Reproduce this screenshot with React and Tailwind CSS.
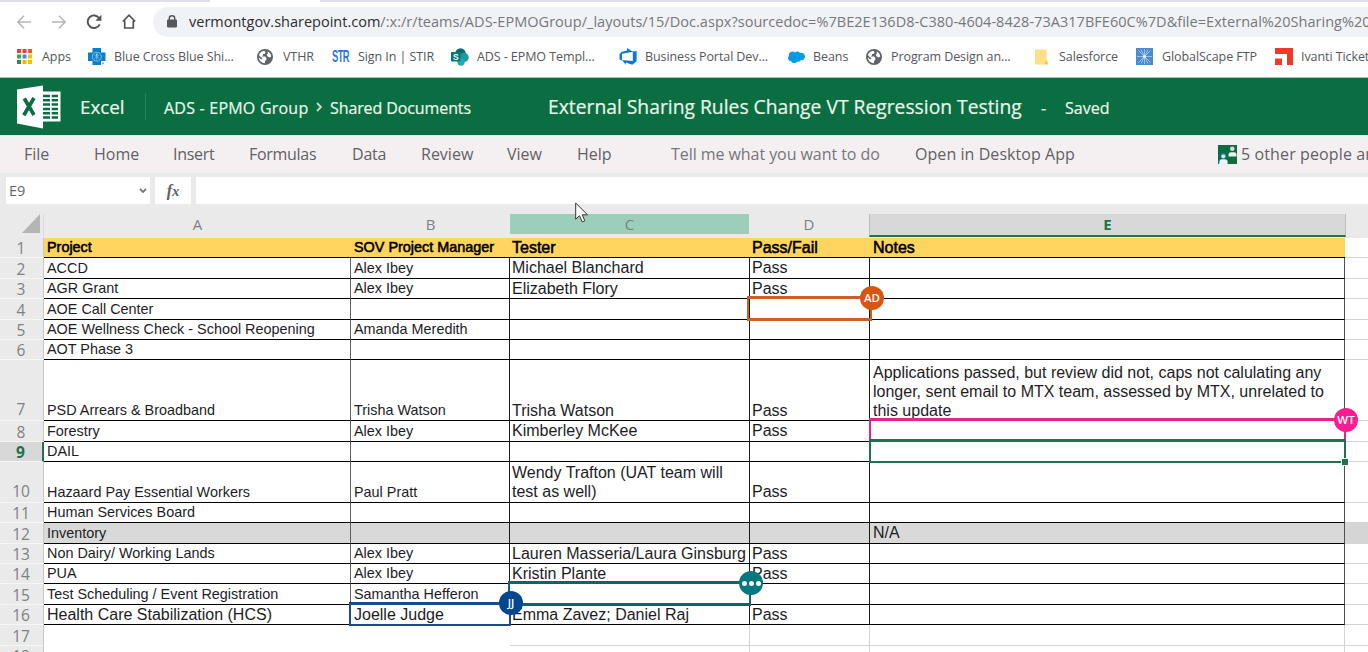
import React from "react";

const UI = "font-['Open_Sans','Noto_Sans',sans-serif]";

/* ---------- icons ---------- */
function Globe() {
  return (
    <svg viewBox="0 0 16 16" className="h-4 w-4">
      <circle cx="8" cy="8" r="8" fill="#5f6368" />
      <path d="M2 5.600C3 3.400 5 2 7.200 1.700L8.600 3.200 7.600 5H6v1.500L4.600 7.600h3.600L9.400 9v1.600l-1.200 1.400L7.800 14.200C4.600 14.200 2 11.500 1.700 8.600L4.400 10.600 5.400 9.300 2.500 7z" fill="#fff" />
      <path d="M10.600 2.400C12.600 3.400 14 5 14.300 7.400L12.600 8.600 10.600 7.600 9.700 5.600 10.900 4.600z" fill="#fff" />
    </svg>
  );
}

function AppsIcon() {
  const c = ["#ea4335", "#ea4335", "#f0592b", "#34a853", "#4285f4", "#fbbc05", "#34855a", "#f6b400", "#fbbc05"];
  return (
    <svg viewBox="0 0 15 15" className="h-[15px] w-[15px]">
      {c.map((f, i) => (
        <rect key={i} x={(i % 3) * 5.5} y={Math.floor(i / 3) * 5.5} width="4" height="4" fill={f} />
      ))}
    </svg>
  );
}

function BlueCross() {
  return (
    <svg viewBox="0 0 18 18" className="h-[18px] w-[18px]">
      <path d="M4.500 0h8.500v4.500H17.500v8.500H13V17H4.500V13H0V4.500h4.500z" fill="#0b7fc7" />
      <circle cx="8.800" cy="8.700" r="4.500" fill="none" stroke="#7fc0ea" strokeWidth="1" />
      <path d="M8.800 5v7.500M6.500 7.200l4.700 3.200M11.200 7.200L6.500 10.400" stroke="#7fc0ea" strokeWidth=".8" />
      <circle cx="8.800" cy="6.800" r="1.100" fill="#9fd2f0" />
      <circle cx="15" cy="15.500" r="1" fill="#58a9dc" />
    </svg>
  );
}

function SharePoint() {
  return (
    <svg viewBox="0 0 18 18" className="h-[18px] w-[18px]">
      <circle cx="9.500" cy="5.500" r="5.200" fill="#036c70" />
      <circle cx="13" cy="9.500" r="4.700" fill="#1a9ba1" />
      <circle cx="10" cy="14" r="3.700" fill="#2ba9b3" />
      <rect x="0" y="4" width="9.500" height="9.500" rx="1" fill="#03787c" />
      <text x="2" y="12" fontFamily="Liberation Sans, sans-serif" fontWeight="700" fontSize="8.500" fill="#fff">S</text>
    </svg>
  );
}

function Azure() {
  return (
    <svg viewBox="0 0 18 17" className="h-[17px] w-[18px]">
      <path d="M17.600 3v10.300l-4.300 3.500-6.600-2.400v2.400L3 12l10.800.9V3.600zM14 3.700L8 0v2.400L2.300 4.100.5 6.400v5l2.500 1.100V5.800z" fill="#0b78d6" />
    </svg>
  );
}

function Cloud() {
  return (
    <svg viewBox="0 0 17 12" className="h-3 w-[17px]">
      <path d="M7 1.500A3.400 3.400 0 0 1 12 1.900 4 4 0 0 1 17 5.500 3.900 3.900 0 0 1 12.500 9.300 2.900 2.900 0 0 1 9 10.600 3.300 3.300 0 0 1 3.200 10.200 3.200 3.200 0 0 1 .9 4.900 3.700 3.700 0 0 1 7 1.500z" fill="#069be0" />
    </svg>
  );
}

function Folder() {
  return (
    <svg viewBox="0 0 14 16" className="h-4 w-[14px]">
      <path d="M1 .5h11.500v10l1 .8V15.500H1z" fill="#fddf85" />
      <path d="M10.800 12.500h2.700v3h-2.700z" fill="#f1c85f" />
    </svg>
  );
}

function GlobalScape() {
  return (
    <svg viewBox="0 0 17 17" className="h-[17px] w-[17px]">
      <rect width="17" height="17" fill="#4c8ccd" />
      <path d="M8.500 1v15M1 8.500h15M2.500 2.500l12 12M14.500 2.500l-12 12M5 1.500l7 14M12 1.500l-7 14" stroke="#b5d8f3" strokeWidth=".7" />
      <circle cx="8.500" cy="8.500" r="1.600" fill="#e4f2fb" />
    </svg>
  );
}

function Ivanti() {
  return (
    <svg viewBox="0 0 18 17" className="h-[17px] w-[18px]">
      <path d="M0 0h18v17h-6V6H0zM0 10.500h7V17H0z" fill="#ea3c2a" />
    </svg>
  );
}

function ExcelLogo() {
  return (
    <svg viewBox="0 0 44 44" className="h-11 w-11 shrink-0">
      <path d="M25 6.500h18.500v30H25z" fill="#fff" />
      <path d="M26 11h7M34.700 11h6.300M26 15.300h7M34.700 15.300h6.300M26 19.600h7M34.700 19.600h6.300M26 23.900h7M34.700 23.900h6.300M26 28.200h7M34.700 28.200h6.300M26 32.500h7M34.700 32.500h6.300" stroke="#0b6e43" strokeWidth="2.500" />
      <path d="M0 4.500L26 .5v43L0 38.500z" fill="#fff" />
      <path d="M7.300 13.500L17 30M17 13L6.800 30.200" stroke="#0b6e43" strokeWidth="3.700" fill="none" />
    </svg>
  );
}

function People() {
  return (
    <svg viewBox="0 0 19 19" className="h-[19px] w-[19px]">
      <rect width="19" height="19" fill="#0b6e43" />
      <circle cx="14.300" cy="3.800" r="2.300" fill="#e0d6da" />
      <path d="M10.500 11.500V9.500q0-2.300 2.500-2.300h3q2.500 0 2.500 2.300v2z" fill="#f1ecee" />
      <circle cx="5.300" cy="11" r="2.700" fill="#2b88d8" />
      <circle cx="5.300" cy="11.300" r="1.900" fill="#d5eafb" />
      <path d="M1 19v-2q0-2.800 2.800-2.800h3q2.800 0 2.800 2.800v2z" fill="#eaf4fc" />
      <path d="M1 18.500v-1.500q0-2.500 2-2.800" stroke="#2b88d8" fill="none" />
    </svg>
  );
}

/* ---------- browser chrome ---------- */
const bookmarks = [
  { icon: <AppsIcon />, slot: "w-[25px]", item: "w-[71px]", label: "Apps" },
  { icon: <BlueCross />, slot: "w-[26px]", item: "w-[169px]", label: "Blue Cross Blue Shi..." },
  { icon: <Globe />, slot: "w-[26px]", item: "w-[75px]", label: "VTHR" },
  {
    icon: <div className="h-5 w-[17px] origin-left scale-x-[0.55] font-['Liberation_Sans',sans-serif] text-[17px] font-bold leading-5 tracking-[-1px] text-[#2f74e0]">STR</div>,
    slot: "w-[26px]",
    item: "w-[119px]",
    label: "Sign In | STIR",
  },
  { icon: <SharePoint />, slot: "w-[26px]", item: "w-[168px]", label: "ADS - EPMO Templ..." },
  { icon: <Azure />, slot: "w-[26px]", item: "w-[169px]", label: "Business Portal Dev..." },
  { icon: <Cloud />, slot: "w-[25px]", item: "w-[78px]", label: "Beans" },
  { icon: <Globe />, slot: "w-[25px]", item: "w-[168px]", label: "Program Design an..." },
  { icon: <Folder />, slot: "w-[25px]", item: "w-[102px]", label: "Salesforce" },
  { icon: <GlobalScape />, slot: "w-[26px]", item: "w-[139px]", label: "GlobalScape FTP" },
  { icon: <Ivanti />, slot: "w-[26px]", item: "w-[110px]", label: "Ivanti Ticket" },
];

function Chrome() {
  return (
    <div className="h-[77px] bg-white">
      <div className="flex h-[2px] bg-[#dee0e6]">
        <div className="ml-[210px] w-[110px] bg-white" />
      </div>
      <div className="flex h-[39px] items-center">
        <div className="flex w-[153px] shrink-0 items-center pl-[17px]">
          <svg viewBox="0 0 14 14" className="mr-[21px] h-[14px] w-[14px]" fill="none" stroke="#b6b6b9" strokeWidth="1.500"><path d="M14 7H1M7 .8L.9 7 7 13.200" /></svg>
          <svg viewBox="0 0 14 14" className="mr-[20px] h-[14px] w-[14px]" fill="none" stroke="#b6b6b9" strokeWidth="1.500"><path d="M0 7h13M7 .8L13.100 7 7 13.200" /></svg>
          <svg viewBox="0 0 16 16" className="mr-[20px] h-4 w-4" fill="none" stroke="#4f5256" strokeWidth="1.900"><path d="M13.700 10.300A6.300 6.300 0 1 1 13.200 4.200" /><path d="M15.400.8v6H9.400z" fill="#4f5256" stroke="none" /></svg>
          <svg viewBox="0 0 14 15" className="h-[15px] w-[14px]" fill="none" stroke="#4f5256" strokeWidth="1.700"><path d="M.8 7.500L7 1.200l6.200 6.300M2.700 6.800v7.200h8.600V6.800" /></svg>
        </div>
        <div className="flex h-[30px] grow items-center overflow-hidden rounded-l-full bg-[#f1f2f5] pl-[14px]">
          <svg viewBox="0 0 10 13" className="mr-3 h-[13px] w-[10px] shrink-0"><rect y="4.500" width="10" height="8" rx="1" fill="#55585c" /><path d="M2.300 5V3.200a2.700 2.400 0 0 1 5.400 0V5" fill="none" stroke="#55585c" strokeWidth="1.500" /></svg>
          <span className="whitespace-nowrap text-[14.5px] leading-5 text-[#2b2d30]">
            vermontgov.sharepoint.com
            <span className="tracking-[0.035px] text-[#75787c]">/:x:/r/teams/ADS-EPMOGroup/_layouts/15/Doc.aspx?sourcedoc=%7BE2E136D8-C380-4604-8428-73A317BFE60C%7D&amp;file=External%20Sharing%20</span>
          </span>
        </div>
      </div>
      <div className="flex h-[31px] items-center overflow-hidden pl-[17px]">
        {bookmarks.map((b, i) => (
          <div key={i} className={`flex shrink-0 items-center ${b.item}`}>
            <div className={`shrink-0 ${b.slot}`}>{b.icon}</div>
            <span className="whitespace-nowrap text-[12.5px] leading-4 tracking-[-0.08px] text-[#55575b]">{b.label}</span>
          </div>
        ))}
      </div>
    </div>
  );
}

function TitleBar() {
  return (
    <div className="flex h-[58px] items-center overflow-hidden whitespace-nowrap border-t border-[#9fc9b4] bg-[#0b6e43] pl-[17px] text-[#e9f7ea] [-webkit-text-stroke:0.2px_#e9f7ea]">
      <ExcelLogo />
      <div className="w-[64px] shrink-0 pl-[19px] text-[18.8px] leading-6">Excel</div>
      <div className="ml-5 mr-[18px] h-[27px] w-px shrink-0 bg-[#2b8059]" />
      <div className="w-[151px] shrink-0 pt-[2px] text-base tracking-[0.22px]">ADS - EPMO Group</div>
      <svg viewBox="0 0 8 10" className="mr-[7px] h-[10px] w-2 shrink-0" fill="none" stroke="#c5dccd" strokeWidth="1.800"><path d="M2 1l4 4-4 4" /></svg>
      <div className="w-[218px] shrink-0 pt-[2px] text-base tracking-[-0.1px]">Shared Documents</div>
      <div className="w-[493px] shrink-0 text-[19.3px] leading-6">External Sharing Rules Change VT Regression Testing</div>
      <div className="w-6 shrink-0 pt-[2px] text-base">-</div>
      <div className="pt-[2px] text-base">Saved</div>
    </div>
  );
}

const menu = [
  { label: "File", w: "w-[70px]" },
  { label: "Home", w: "w-[79px]" },
  { label: "Insert", w: "w-[76px] tracking-[-0.3px]" },
  { label: "Formulas", w: "w-[103px] tracking-[-0.3px]" },
  { label: "Data", w: "w-[69px] tracking-[-0.2px]" },
  { label: "Review", w: "w-[86px]" },
  { label: "View", w: "w-[70px]" },
  { label: "Help", w: "w-[94px]" },
  { label: "Tell me what you want to do", w: "w-[244px] tracking-[-0.06px] text-[#77757a]" },
  { label: "Open in Desktop App", w: "w-[303px] tracking-[0.06px]" },
];

function Ribbon() {
  return (
    <div className="flex h-[38px] items-center overflow-hidden whitespace-nowrap bg-[#f4f0f2] pl-6 text-base text-[#626064]">
      {menu.map((m) => (
        <div key={m.label} className={`shrink-0 ${m.w}`}>{m.label}</div>
      ))}
      <div className="w-[23px] shrink-0"><People /></div>
      <div className="tracking-[0.12px]">5 other people are</div>
    </div>
  );
}

function FormulaBar() {
  return (
    <div className="flex h-[41px] bg-[#eaeaea] pb-[10px] pl-[6px] pt-1">
      <div className="flex w-[144px] items-center justify-between bg-white pl-[3px] pr-[3px] text-[14.5px] text-[#66666a]">
        E9
        <svg viewBox="0 0 8 6" className="h-[6px] w-2" fill="none" stroke="#77777a" strokeWidth="1.800"><path d="M1 1l3 3 3-3" /></svg>
      </div>
      <div className="ml-[5px] flex w-9 items-center justify-center bg-white font-['Liberation_Serif',serif] text-base font-bold italic leading-5 text-[#606060]">
        f<span className="pt-[3px] text-[14px]">x</span>
      </div>
      <div className="ml-[5px] grow bg-white" />
    </div>
  );
}

/* ---------- sheet ---------- */
const letter = "flex items-center justify-center shrink-0 h-5 text-[15px] text-[#808083]";

function ColumnHeads() {
  return (
    <div className="flex h-6 bg-[#eaeaea]">
      <div className="flex w-11 shrink-0 justify-end border-r border-[#dcdcdc] pr-[3px]">
        <svg viewBox="0 0 18 19" className="h-[19px] w-[18px]"><path d="M18 0v19H0z" fill="#b5b5b7" /></svg>
      </div>
      <div className={`${letter} w-[307px]`}>A</div>
      <div className={`${letter} w-[159px]`}>B</div>
      <div className={`${letter} w-[239px] bg-[#9ccfba] text-[#5f8374]`}>C</div>
      <div className={`${letter} w-[120px]`}>D</div>
      <div className="flex h-[23px] w-[477px] shrink-0 items-center justify-center border-b-2 border-l border-r border-b-[#21704e] border-l-[#bcbcbc] border-r-[#bcbcbc] bg-[#d8d8d8] text-[15px] font-bold text-[#21704e]">E</div>
    </div>
  );
}

const rows = [
  { n: 1, h: "h-5", head: true, c: ["Project", "SOV Project Manager", "Tester", "Pass/Fail", "Notes"] },
  { n: 2, h: "h-[21px]", lift: true, c: ["ACCD", "Alex Ibey", "Michael Blanchard", "Pass", ""] },
  { n: 3, h: "h-5", c: ["AGR Grant", "Alex Ibey", "Elizabeth Flory", "Pass", ""] },
  { n: 4, h: "h-[21px]", c: ["AOE Call Center", "", "", "", ""] },
  { n: 5, h: "h-5", c: ["AOE Wellness Check - School Reopening", "Amanda Meredith", "", "", ""] },
  { n: 6, h: "h-5", c: ["AOT Phase 3", "", "", "", ""] },
  { n: 7, h: "h-[61px]", tall: true, c: ["PSD Arrears & Broadband", "Trisha Watson", "Trisha Watson", "Pass", "Applications passed, but review did not, caps not calulating any\nlonger, sent email to MTX team, assessed by MTX, unrelated to\nthis update"] },
  { n: 8, h: "h-[21px]", lift: true, c: ["Forestry", "Alex Ibey", "Kimberley McKee", "Pass", ""] },
  { n: 9, h: "h-5", active: true, c: ["DAIL", "", "", "", ""] },
  { n: 10, h: "h-[41px]", tall: true, lift: true, c: ["Hazaard Pay Essential Workers", "Paul Pratt", "Wendy Trafton (UAT team will\ntest as well)", "Pass", ""] },
  { n: 11, h: "h-5", c: ["Human Services Board", "", "", "", ""] },
  { n: 12, h: "h-[21px]", gray: true, lift: true, c: ["Inventory", "", "", "", "N/A"] },
  { n: 13, h: "h-5", c: ["Non Dairy/ Working Lands", "Alex Ibey", "Lauren Masseria/Laura Ginsburg", "Pass", ""] },
  { n: 14, h: "h-5", c: ["PUA", "Alex Ibey", "Kristin Plante", "Pass", ""] },
  { n: 15, h: "h-[21px]", c: ["Test Scheduling / Event Registration", "Samantha Hefferon", "", "", ""] },
  { n: 16, h: "h-5", big: true, c: ["Health Care Stabilization (HCS)", "Joelle Judge", "Emma Zavez; Daniel Raj", "Pass", ""] },
];

const cols = [
  "w-[307px] pl-[3px] border-r-[#606060]",
  "w-[159px] pl-[3px] border-r-[#1c1c1c]",
  "w-[240px] pl-[2px] border-r-[#1c1c1c]",
  "w-[120px] pl-[2px] border-r-[#1c1c1c]",
  "w-[475px] pl-[3px] border-r-[#505050]",
];

function RowNumber({ n, tall, active }) {
  const tone = active ? "bg-[#d8d8d8] font-bold text-[#21704e] border-r-2 border-r-[#21704e]" : "bg-[#eaeaea] text-[#808083] border-r border-r-[#c8c8c8]";
  return (
    <div className={`flex w-11 shrink-0 items-end justify-center border-b border-b-[#f6f6f6] text-[15.5px] leading-[18px] ${tone} ${tall ? "pb-[2px]" : ""}`}>
      <span className="pr-px">{n}</span>
    </div>
  );
}

function Row({ row }) {
  return (
    <div className={`flex ${row.h}`}>
      <RowNumber n={row.n} tall={row.tall} active={row.active} />
      {row.c.map((text, i) => (
        <div
          key={i}
          className={`flex shrink-0 items-end border-b border-b-black text-black ${cols[i]} ${row.head ? "bg-[#ffd560] [-webkit-text-stroke:0.55px_black]" : "border-r"} ${row.gray ? "bg-[#d9d9da]" : ""} ${i < 2 && !row.big ? "text-[14.4px]" : "text-base"} font-['Liberation_Sans',sans-serif]`}
        >
          <span className={`block whitespace-pre leading-[19px] ${i > 1 && row.lift ? "-mt-px pb-px" : ""} ${row.head ? "" : "text-[#1d1d1f]"}`}>{text}</span>
        </div>
      ))}
      <div className={`grow border-b border-b-[#d4d4d4] ${row.gray ? "bg-[#d5d5d6]" : "bg-white"}`} />
    </div>
  );
}

function Sheet() {
  return (
    <div className="bg-white">
      {rows.map((r) => (
        <Row key={r.n} row={r} />
      ))}
      <div className="flex h-[21px]">
        <RowNumber n={17} />
        <div className="w-[466px] shrink-0" />
        <div className="w-[240px] shrink-0 border-b border-r border-[#d4d4d4]" />
        <div className="w-[120px] shrink-0 border-b border-r border-[#d4d4d4]" />
        <div className="w-[475px] shrink-0 border-b border-r border-[#d4d4d4]" />
        <div className="grow border-b border-[#d4d4d4]" />
      </div>
      <div className="flex h-5">
        <RowNumber n={18} />
        <div className="w-[706px] shrink-0 border-r border-[#d4d4d4]" />
        <div className="w-[120px] shrink-0 border-r border-[#d4d4d4]" />
        <div className="w-[475px] shrink-0 border-r border-[#d4d4d4]" />
      </div>
    </div>
  );
}

/* ---------- collaborator selections ---------- */
const badge = "absolute flex h-6 w-6 items-center justify-center rounded-full text-white";

function Presence() {
  return (
    <>
      <div className="absolute left-[747px] top-[296px] h-[25px] w-[125px] border-x-[2.5px] border-b-[3px] border-t-[3px] border-[#c9602a]" />
      <div className={`${badge} left-[860px] top-[286px] bg-[#d8560f] text-[11.5px] font-semibold`}>AD</div>

      <div className="absolute left-[869px] top-[418px] h-[24px] w-[477px] border-x-2 border-t-[3px] border-[#e5258a]" />
      <div className="absolute left-[869px] top-[439px] h-[24px] w-[477px] border-x-2 border-b-2 border-t-[3px] border-[#21704e]" />
      <div className="absolute left-[1342px] top-[459px] h-[6px] w-[6px] bg-[#21704e] outline outline-1 outline-white" />
      <div className={`${badge} left-[1334px] top-[408px] bg-[#f71f90] text-[11.5px] font-semibold`}>WT</div>

      <div className="absolute left-[508px] top-[581px] h-[25px] w-[243px] border-x-2 border-b-[3px] border-t-[3px] border-[#0d646b]" />
      <div className={`${badge} left-[739px] top-[571px] gap-[2px] bg-[#03787f]`}>
        <i className="h-[5px] w-[5px] rounded-full bg-white" />
        <i className="h-[5px] w-[5px] rounded-full bg-white" />
        <i className="h-[5px] w-[5px] rounded-full bg-white" />
      </div>

      <div className="absolute left-[349px] top-[602px] h-[24px] w-[162px] border-x-2 border-b-2 border-t-[3px] border-[#1a4a8c]" />
      <div className={`${badge} left-[499px] top-[591px] bg-[#03468f] text-[11px] font-semibold`}>JJ</div>

      <svg viewBox="0 0 14 21" className="absolute left-[575px] top-[202px] h-[21px] w-[14px]">
        <path d="M.7 1v16.200l3.800-3.500 2.700 6.200 2.600-1.100-2.600-6h5.300z" fill="#fff" stroke="#333" strokeWidth="1" />
      </svg>
    </>
  );
}

export default function App() {
  return (
    <div className={`relative h-[652px] w-[1368px] overflow-hidden bg-white ${UI}`}>
      <Chrome />
      <TitleBar />
      <Ribbon />
      <FormulaBar />
      <ColumnHeads />
      <Sheet />
      <Presence />
    </div>
  );
}
